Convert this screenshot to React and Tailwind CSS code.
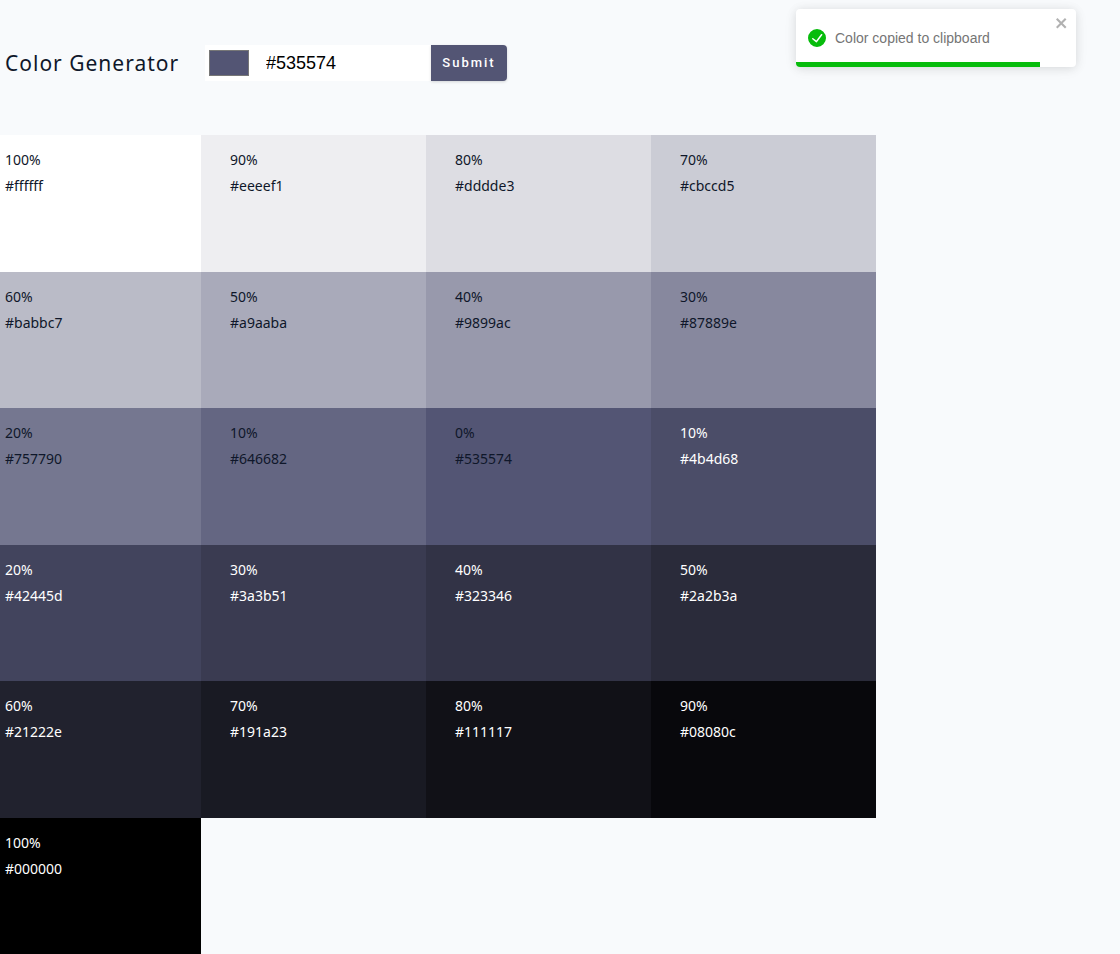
import { useState } from "react";

const shades = [
  [100, "#ffffff"], [90, "#eeeef1"], [80, "#dddde3"], [70, "#cbccd5"],
  [60, "#babbc7"], [50, "#a9aaba"], [40, "#9899ac"], [30, "#87889e"],
  [20, "#757790"], [10, "#646682"], [0, "#535574"], [10, "#4b4d68"],
  [20, "#42445d"], [30, "#3a3b51"], [40, "#323346"], [50, "#2a2b3a"],
  [60, "#21222e"], [70, "#191a23"], [80, "#111117"], [90, "#08080c"],
  [100, "#000000"],
];

function Shade({ weight, hex, light }) {
  return (
    <article
      className={`min-h-32 px-[29px] pt-3 text-sm leading-[26px] ${light ? "text-white" : "text-[#0f172a]"}`}
      style={{ backgroundColor: hex }}
    >
      <p>{weight}%</p>
      <p>{hex}</p>
    </article>
  );
}

function Toast() {
  return (
    <div
      role="alert"
      className="absolute top-[9px] right-11 flex h-[58px] w-[280px] items-center overflow-hidden rounded bg-white pl-3 font-['Liberation_Sans',sans-serif] text-sm text-[#757575] shadow-[0_1px_10px_0_rgba(0,0,0,0.1),0_2px_15px_0_rgba(0,0,0,0.05)]"
    >
      <svg viewBox="0 0 24 24" className="mr-[9px] size-[18px]" fill="#07bc0c" aria-hidden="true">
        <path d="M12 0a12 12 0 1012 12A12.014 12.014 0 0012 0zm6.927 8.2l-6.845 9.289a1.011 1.011 0 01-1.43.188l-4.888-3.908a1 1 0 111.25-1.562l4.076 3.261 6.227-8.451a1 1 0 111.61 1.183z" />
      </svg>
      <p>Color copied to clipboard</p>
      <button type="button" aria-label="close" className="absolute top-1.5 right-[7px] opacity-30">
        <svg viewBox="0 0 14 16" className="h-4 w-3.5" fill="#000" aria-hidden="true">
          <path fillRule="evenodd" d="M7.71 8.23l3.75 3.75-1.48 1.48-3.75-3.75-3.75 3.75L1 11.98l3.75-3.75L1 4.48 2.48 3l3.75 3.75L9.98 3l1.48 1.48-3.75 3.75z" />
        </svg>
      </button>
      <div className="absolute bottom-0 left-0 h-[5px] w-[87%] bg-[#07bc0c]" />
    </div>
  );
}

export default function App() {
  const [color, setColor] = useState("#535574");
  return (
    <main className="relative flex min-h-screen flex-col overflow-hidden bg-[#f8fafc] font-['Noto_Sans',sans-serif] text-[#0f172a]">
      <header className="flex h-[135px] items-start pt-[45px] pl-[5px]">
        <h1 className="w-[200px] text-[21px] leading-9 tracking-[1px]">Color Generator</h1>
        <form className="flex h-9" onSubmit={(e) => e.preventDefault()}>
          <div className="flex items-center bg-white pl-1">
            <input
              type="color"
              aria-label="Pick a color"
              value={color}
              onChange={(e) => setColor(e.target.value)}
              className="h-[26px] w-10 [&::-webkit-color-swatch]:border [&::-webkit-color-swatch]:border-[#777777] [&::-webkit-color-swatch-wrapper]:p-0"
            />
            <input
              type="text"
              aria-label="Color value"
              value={color}
              onChange={(e) => setColor(e.target.value)}
              className="h-9 w-[182px] pl-[17px] font-['Liberation_Sans',sans-serif] text-lg text-black outline-none"
            />
          </div>
          <button
            type="submit"
            className="w-[76px] rounded-r bg-[#535574] font-['Roboto',sans-serif] text-[13px] font-medium tracking-[2px] text-white shadow-[0_1px_3px_0_rgba(0,0,0,0.15)]"
          >
            Submit
          </button>
        </form>
      </header>
      <section className="mr-[244px] -ml-6 grid flex-1 auto-rows-fr grid-cols-4">
        {shades.map(([weight, hex], i) => (
          <Shade key={hex} weight={weight} hex={hex} light={i > 10} />
        ))}
      </section>
      <Toast />
    </main>
  );
}
